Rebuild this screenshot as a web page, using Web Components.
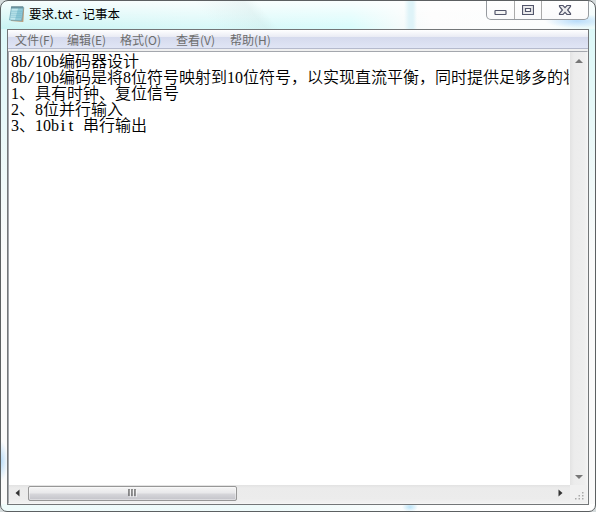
<!DOCTYPE html>
<html lang="zh-CN">
<head>
<meta charset="utf-8">
<title>要求.txt - 记事本</title>
<style>
html,body{margin:0;width:596px;height:512px;overflow:hidden;background:#d5dbdc}
</style>
</head>
<body>
<note-window></note-window>
<script>
const define = (name, html, setup) => {
  const t = document.createElement('template');
  t.innerHTML = html;
  customElements.define(name, class extends HTMLElement {
    constructor() {
      super();
      this.attachShadow({mode: 'open'}).append(t.content.cloneNode(true));
    }
    connectedCallback() { if (setup) setup(this); }
  });
};

define('note-icon', `<style>:host{display:block;width:18px;height:18px}svg{display:block}</style>
<svg width="18" height="18" viewBox="0 0 18 18">
<path d="M4.500 2.500L16.200 2.500 15.300 17 3 16Z" fill="#b99a78"/>
<path d="M3.500 2L15.500 2 13.600 15.800 1.500 15Z" fill="#92cbd9" stroke="#6ba3b4" stroke-width=".7"/>
<path d="M3.800 3.500H10L7 14.700 2.200 14.500Z" fill="#c9ecf0" opacity=".85"/>
<path d="M3.300 6.200h10.700M3 8.200h10.700M2.800 10.200h10.600M2.500 12.200h10.600" stroke="#5ea9be" stroke-width=".5"/>
<path d="M4 1v2.500M6 1v2.500M8 1v2.500M10 1v2.500M12 1v2.500M14 1v2.500" stroke="#47626b" stroke-width=".9"/>
</svg>`);

define('caption-buttons', `<style>
:host{display:flex;box-sizing:border-box;width:103px;height:19px;border:1px solid #969a9f;border-top:0;border-radius:0 0 5px 5px;background:linear-gradient(#fff,#fafafb)}
div{display:flex;justify-content:center;box-sizing:border-box;height:18px}
.a{width:27px}.b{width:27px;border-left:1px solid #aaa}.c{flex:1;border-left:1px solid #aaa}
svg{display:block}
</style>
<div class="a"><svg width="13" height="18"><rect x="1" y="9.500" width="11" height="4" rx=".5" fill="#f4f4f4" stroke="#53566b" stroke-width="1.200"/></svg></div>
<div class="b"><svg width="12" height="18"><path d="M.5 4.500h11v9H.500z M3.500 7.500h5v3h-5z" fill="#ececee" fill-rule="evenodd" stroke="#53566b" stroke-width="1.200"/></svg></div>
<div class="c"><svg width="14" height="18"><path d="M1.500 4.500H5L7 6.700 9 4.500h3.500v1L9.600 9l2.900 3.500v1H9L7 11.300 5 13.500H1.500v-1L4.400 9 1.500 5.500z" fill="#eeeeef" stroke="#53566b" stroke-width="1.200"/></svg></div>`);

define('title-bar', `<style>
:host{display:flex;height:28px;box-sizing:border-box;padding-left:7px;font:12.500px/26px "Noto Sans CJK SC",sans-serif;color:#000}
note-icon{margin-top:4px}
span{margin-left:3px;flex:1;white-space:pre}
caption-buttons{margin-right:6px}
</style><note-icon></note-icon><span><slot></slot></span><caption-buttons></caption-buttons>`);

define('menu-item', `<style>:host{display:block;white-space:pre;font:12px/20px "Noto Sans CJK SC",sans-serif;color:#6d6d6d}</style><slot></slot>`);

define('menu-bar', `<style>
:host{display:flex;box-sizing:border-box;height:21px;flex:none;padding-left:7px;background:linear-gradient(#fff 0,#e9ebf4 7px,#d5daed 7px,#e0e5f5 18px,#b5bacd 18px,#b5bacd 19px,#f0f0f0 19px)}
::slotted(menu-item){flex:none}
::slotted(.w52){width:52px}::slotted(.w53){width:53px}::slotted(.w56){width:56px}::slotted(.w54){width:54px}
</style><slot></slot>`);

/* Every Latin character fills an 8px cell; the narrow ones are widened or padded. */
define('text-line', `<style>
:host{display:block;height:16px;white-space:pre;font:16px/16px "Liberation Serif","Noto Sans CJK SC",serif;color:#000}
span{line-height:16px}
.n,.f{display:inline-block;width:8px;height:16px;vertical-align:baseline;text-align:center}
.f{transform:scaleX(1.500)}.n{transform:scaleX(1.100)}
.s{letter-spacing:4px}
.z{font-family:"Noto Sans CJK SC",sans-serif;font-weight:350}
</style><span id="t"></span>`, el => {
  const out = el.shadowRoot.getElementById('t');
  out.textContent = '';
  for (const run of el.getAttribute('text').match(/[\/it]| +|[0-9b]+|[^\x00-\x7f]+/g)) {
    const s = document.createElement('span');
    s.textContent = run;
    s.className = run === '/' ? 'f' : /[it]/.test(run) ? 'n' : run[0] === ' ' ? 's' : /^[0-9b]/.test(run) ? '' : 'z';
    out.append(s);
  }
});

define('v-scroll', `<style>
:host{display:flex;flex-direction:column;justify-content:space-between;align-items:center;width:17px;flex:none;box-sizing:border-box;padding:7px 0 6px;background:linear-gradient(90deg,#e3e3e3,#ececec 4px,#eee 14px,#f3f3f3)}
svg{display:block}
</style>
<svg width="8" height="4"><path d="M0 4L4 0 8 4z" fill="#777"/></svg>
<svg width="8" height="4"><path d="M0 0L4 4 8 0z" fill="#777"/></svg>`);

define('h-scroll', `<style>
:host{display:flex;align-items:center;flex:1;box-sizing:border-box;height:17px;padding:0 7px 0 6px;background:linear-gradient(#e2e2e2,#ebebeb 3px,#ececec 14px,#f1f1f1)}
svg{display:block;flex:none}
.l{margin-right:8px;margin-top:-1px}.r{margin-left:auto;margin-top:-1px}
.thumb{box-sizing:border-box;width:209px;height:15px;margin-top:-1px;border:1px solid #979797;border-radius:2px;background:linear-gradient(#f5f5f5,#e8e8ea 6px,#d6d6da 7px,#c3c3c9);box-shadow:inset 0 0 0 1px #ffffff66;display:flex;align-items:center;justify-content:center}
</style>
<svg class="l" width="5" height="8"><path d="M4.500 .5v7L.5 4z" fill="#333"/></svg>
<div class="thumb"><svg width="9" height="8"><path d="M1 0v7M4 0v7M7 0v7" stroke="#555" stroke-width="1.300"/><path d="M2.300 1v7M5.300 1v7M8.300 1v7" stroke="#fff" stroke-width=".7"/></svg></div>
<svg class="r" width="5" height="8"><path d="M.5 .5v7L4.500 4z" fill="#333"/></svg>`);

define('size-grip', `<style>:host{display:block;width:17px;height:17px;background:#f0f0f0}svg{display:block}</style>
<svg width="17" height="17"><path d="M12 7h1.500v1.500H12zM8.500 10h1.500v1.500H8.500zM12 10h1.500v1.500H12zM5 13h1.500v1.500H5zM8.500 13h1.500v1.500H8.500zM12 13h1.500v1.500H12z" fill="#aaa"/></svg>`);

define('note-window', `<style>
:host{display:block;box-sizing:border-box;width:596px;height:512px;border:1px solid #5c6062;border-radius:8px 8px 7px 7px;overflow:hidden;
background:
 radial-gradient(ellipse 32px 7px at 576px 20px,#b9dcfa,transparent),
 linear-gradient(90deg,transparent 403px,#dff3f8 408px,#dff3f8 412px,transparent 416px) 0 0/100% 28px no-repeat,
 radial-gradient(ellipse 7px 20px at 0 460px,#b9dcf8,transparent),
 radial-gradient(ellipse 8px 5px at 409px 506px,#bce4f8,transparent),
 linear-gradient(50deg,transparent 20px,#c8dcdc40 58px,transparent 68px) 190px 0/100px 28px no-repeat,
 linear-gradient(180deg,#ffffffd9,#ffffff00 27px) 0 0/100% 28px no-repeat,
 linear-gradient(90deg,#c9f4f3 0,#d8f8f8 190px,#d9fcfc 350px,#f4fbfb 400px,#fcfcfc 430px,#fbfdfd 550px,#e9fafa) 0 0/100% 28px no-repeat,
 linear-gradient(90deg,#effbfb,#eefafa 270px,#fdfefe 430px,#fff) 0 100%/100% 7px no-repeat,
 linear-gradient(#d9f8f8,#e8f8f8 120px,#fafafa 260px,#fafafa)}
main{display:flex;flex-direction:column;box-sizing:border-box;margin-left:6px;width:582px;height:476px;border:1px solid #737678;background:#f0f0f0}
.edit{display:flex;flex-direction:column;flex:1;min-height:0;box-sizing:border-box;border:1px solid #a4a7ad;border-right-color:#f5f5f5;border-bottom-color:#f5f5f5;padding:0 0 1px}
.top{display:flex;flex:1;min-height:0;background:#fff}
.text{flex:1;min-width:0;overflow:hidden;padding:0 0 0 2px;margin-right:1px}
.bottom{display:flex;flex:none}
</style>
<title-bar>要求.txt - 记事本</title-bar>
<main>
<menu-bar><menu-item class="w52">文件(F)</menu-item><menu-item class="w53">编辑(E)</menu-item><menu-item class="w56">格式(O)</menu-item><menu-item class="w54">查看(V)</menu-item><menu-item>帮助(H)</menu-item></menu-bar>
<div class="edit">
<div class="top"><div class="text">
<text-line text="8b/10b编码器设计"></text-line>
<text-line text="8b/10b编码是将8位符号映射到10位符号，以实现直流平衡，同时提供足够多的状"></text-line>
<text-line text="1、具有时钟、复位信号"></text-line>
<text-line text="2、8位并行输入"></text-line>
<text-line text="3、10bit 串行输出"></text-line>
</div><v-scroll></v-scroll></div>
<div class="bottom"><h-scroll></h-scroll><size-grip></size-grip></div>
</div>
</main>`);
</script>
</body>
</html>
